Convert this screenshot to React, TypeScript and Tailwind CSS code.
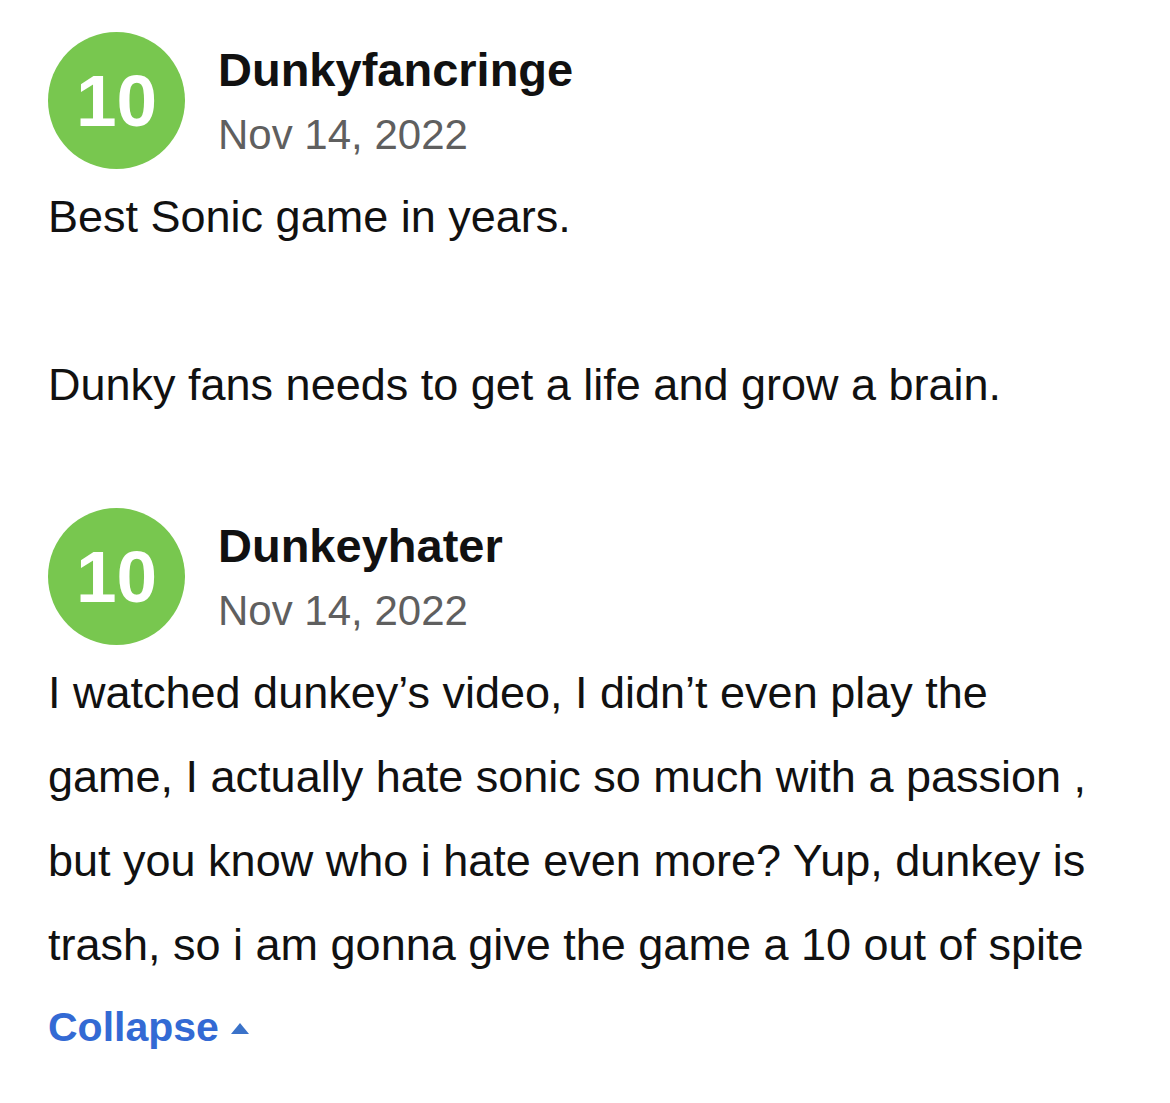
type Review = {
  score: number;
  user: string;
  date: string;
  body: string[];
};

const reviews: Review[] = [
  {
    score: 10,
    user: 'Dunkyfancringe',
    date: 'Nov 14, 2022',
    body: ['Best Sonic game in years.', '', 'Dunky fans needs to get a life and grow a brain.'],
  },
  {
    score: 10,
    user: 'Dunkeyhater',
    date: 'Nov 14, 2022',
    body: [
      'I watched dunkey’s video, I didn’t even play the game, I actually hate sonic so much with a passion , but you know who i hate even more? Yup, dunkey is trash, so i am gonna give the game a 10 out of spite',
    ],
  },
];

function ReviewCard({ review, last }: { review: Review; last: boolean }) {
  return (
    <div className={last ? '' : 'mb-[81px]'}>
      <div className="flex items-start">
        <div className="w-[137px] h-[137px] shrink-0 rounded-full bg-[#78c74f] flex items-center justify-center">
          <span className="text-white font-bold text-[73px] leading-none">{review.score}</span>
        </div>
        <div className="ml-[33px] pt-[13px]">
          <div className="text-[47px] leading-[50px] font-bold text-[#111]">{review.user}</div>
          <div className="mt-[16px] text-[42px] leading-[48px] text-[#5f5f5f]">{review.date}</div>
        </div>
      </div>
      <div className="mt-[6px] text-[45px] leading-[84px] text-[#111]">
        {review.body.map((p, i) => (
          <p key={i}>{p === '' ? '\u00a0' : p}</p>
        ))}
      </div>
    </div>
  );
}

export default function App() {
  return (
    <div
      className="min-h-[1103px] bg-white pl-[48px] pt-[32px] w-[1100px]"
      style={{ fontFamily: '"Liberation Sans", Arial, sans-serif' }}
    >
      {reviews.map((r, i) => (
        <ReviewCard key={r.user} review={r} last={i === reviews.length - 1} />
      ))}
      <button className="mt-[10px] flex items-center gap-[12px] text-[41px] font-bold text-[#336ad4]">
        Collapse
        <svg width="18" height="11" viewBox="0 0 18 11" className="mt-[2px]">
          <path d="M9 0 L18 11 L0 11 Z" fill="#3a72c9" />
        </svg>
      </button>
    </div>
  );
}
